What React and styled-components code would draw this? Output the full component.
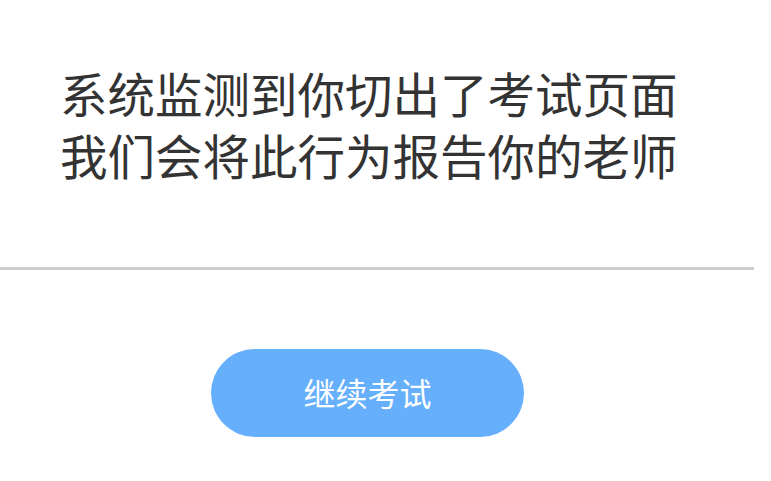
import React from "react";
import styled, { createGlobalStyle } from "styled-components";

const Global = createGlobalStyle`
  html, body { margin: 0; padding: 0; background: #fff; }
  body { font-family: "Noto Sans CJK SC", "Noto Sans", sans-serif; }
`;

const Page = styled.div`
  width: 771px;
  height: 481px;
  display: flex;
  flex-direction: column;
  background: #fff;
  overflow: hidden;
`;

const Message = styled.div`
  padding: 62px 0 0 60px;
  height: 267px;
  box-sizing: border-box;
  font-size: 47.5px;
  line-height: 62px;
  color: #333;
  white-space: nowrap;
`;

const Line = styled.p`
  margin: 0;
  height: 62px;
`;

const Divider = styled.div`
  width: 754px;
  height: 3px;
  flex: none;
  background: #cccccc;
`;

const Actions = styled.div`
  display: flex;
  padding: 79px 0 0 211px;
`;

const Button = styled.button`
  width: 313px;
  height: 88px;
  border: none;
  border-radius: 44px;
  background: #66affd;
  color: #fff;
  font-family: "Noto Sans CJK SC", sans-serif;
  font-size: 32px;
  display: flex;
  align-items: center;
  justify-content: center;
  padding: 0 0 2px 0;
`;

export default function App() {
  return (
    <Page>
      <Global />
      <Message>
        <Line>系统监测到你切出了考试页面</Line>
        <Line>我们会将此行为报告你的老师</Line>
      </Message>
      <Divider />
      <Actions>
        <Button>继续考试</Button>
      </Actions>
    </Page>
  );
}
